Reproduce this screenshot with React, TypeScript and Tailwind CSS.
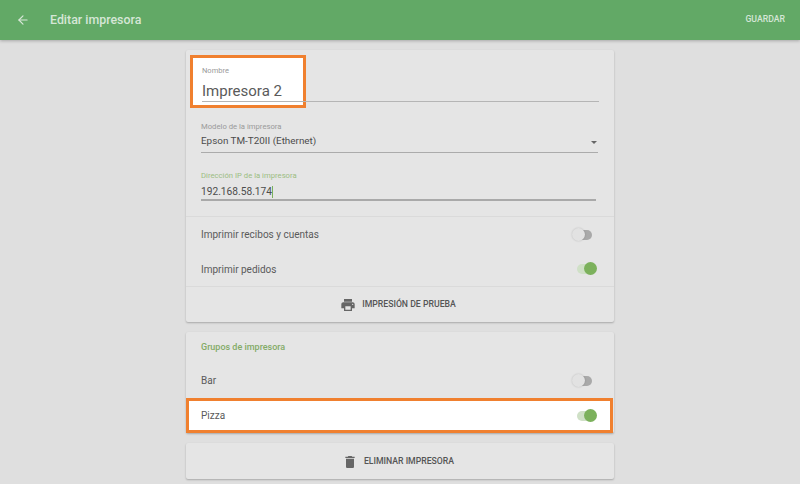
import { ArrowLeft } from "lucide-react"

function Toggle({ on }: { on: boolean }) {
  return (
    <div className="relative h-[20px] w-[25px]">
      <div className={`absolute left-[5px] top-[5px] h-[10px] w-[15px] rounded-full ${on ? "bg-[#cfe0c6]" : "bg-[#a9a9a9]"}`} />
      {on ? (
        <div className="absolute left-[12px] top-[3px] h-[13px] w-[13px] rounded-full bg-[#7cb15c]" />
      ) : (
        <div className="absolute left-0 top-[3px] h-[13px] w-[13px] rounded-full bg-[#e2e2e2] shadow-[0_0_2px_rgba(0,0,0,0.2)]" />
      )}
    </div>
  )
}

function SwitchRow({ label, on, className }: { label: string; on: boolean; className: string }) {
  return (
    <div className={`flex items-center justify-between pl-[15px] pr-[17px] ${className}`}>
      <span className="text-[10px] text-[#5a5a5a]">{label}</span>
      <Toggle on={on} />
    </div>
  )
}

function ActionButton({ label, icon, className }: { label: string; icon: React.ReactNode; className: string }) {
  return (
    <div className={`flex items-center justify-center gap-[6px] pr-[4px] ${className}`}>
      {icon}
      <span className="text-[8.7px] font-medium text-[#555]">{label}</span>
    </div>
  )
}

export default function App() {
  return (
    <div className="flex h-[484px] w-[800px] flex-col overflow-hidden bg-[#dfdfdf] font-['Roboto',sans-serif]">
      <header className="flex h-[40px] shrink-0 items-center bg-[#62a966] pl-[16px] pr-[15px] shadow-[0_1px_3px_rgba(0,0,0,0.25)]">
        <ArrowLeft className="h-[14px] w-[14px] text-[#d9e8d9]" strokeWidth={2} />
        <span className="ml-[20px] mt-[1px] text-[12.4px] font-medium text-[#d5e6d6]">Editar impresora</span>
        <span className="ml-auto text-[8.7px] font-medium text-[#d5e6d6]">GUARDAR</span>
      </header>

      <main className="mx-auto mt-[10px] flex w-[428px] flex-col gap-[10px]">
        <section className="h-[272px] rounded-[2px] bg-[#e5e5e5] shadow-[0_1px_2px_rgba(0,0,0,0.25)]">
          <div className="relative h-[59px] pl-[16px] pr-[15px] pt-[16px]">
            {/* orange callout behind the name field */}
            <div className="absolute left-[4px] top-[5px] h-[53px] w-[116px] border-[3px] border-[#f0802f] bg-white" />
            <div className="relative text-[7.5px] leading-[10px] text-[#9a9a9a]">Nombre</div>
            <div className="relative mt-[5px] text-[15px] leading-[20px] text-[#5a5a5a]">Impresora 2</div>
            <div className="relative h-px bg-[#b5b5b5]" />
          </div>

          <div className="relative mt-[10px] pl-[15px] pr-[16px] pt-[3px]">
            <div className="text-[7.7px] leading-[10px] text-[#9a9a9a]">Modelo de la impresora</div>
            <div className="mt-[2px] text-[9.9px] leading-[14px] text-[#4c4c4c]">Epson TM-T20II (Ethernet)</div>
            <div className="mt-[4px] h-px bg-[#ababab]" />
            <div className="absolute right-[17px] top-[22px] h-0 w-0 border-x-[3.5px] border-t-[3.5px] border-x-transparent border-t-[#666]" />
          </div>

          <div className="mt-[18px] pl-[15px] pr-[18px]">
            <div className="text-[7.7px] leading-[10px] text-[#9cbd82]">Dirección IP de la impresora</div>
            <div className="mt-[4px] flex items-center text-[10.2px] leading-[14px] text-[#4c4c4c]">
              192.168.58.174
              <span className="h-[12px] w-px bg-[#7cb15c]" />
            </div>
            <div className="h-[2px] bg-[#a9a9a9]" />
          </div>

          <div className="mt-[15px] h-px bg-[#dadada]" />
          <SwitchRow label="Imprimir recibos y cuentas" on={false} className="h-[35px]" />
          <SwitchRow label="Imprimir pedidos" on={true} className="h-[34px]" />
          <ActionButton
            label="IMPRESIÓN DE PRUEBA"
            className="h-[36px] border-t border-[#dadada]"
            icon={
              <svg viewBox="0 0 24 24" className="h-[16px] w-[16px] fill-[#666]">
                <path d="M19 8H5c-1.66 0-3 1.34-3 3v6h4v4h12v-4h4v-6c0-1.66-1.34-3-3-3zm-3 11H8v-5h8v5zm3-7c-.55 0-1-.45-1-1s.45-1 1-1 1 .45 1 1-.45 1-1 1zm-1-9H6v4h12V3z" />
              </svg>
            }
          />
        </section>

        <section className="h-[101px] rounded-[2px] bg-[#e5e5e5] shadow-[0_1px_2px_rgba(0,0,0,0.25)]">
          <div className="pl-[15px] pt-[9px] text-[9px] font-medium leading-[12px] text-[#83ab67]">Grupos de impresora</div>
          <SwitchRow label="Bar" on={false} className="mt-[10px] h-[35px]" />
          <SwitchRow label="Pizza" on={true} className="mr-[1px] h-[35px] border-[3px] border-[#f0802f] !pl-[12px] !pr-[13px] bg-white" />
        </section>

        <section className="rounded-[2px] bg-[#e5e5e5] pt-[1px] shadow-[0_1px_2px_rgba(0,0,0,0.25)]">
          <ActionButton
            label="ELIMINAR IMPRESORA"
            className="h-[35px]"
            icon={
              <svg viewBox="0 0 24 24" className="h-[16px] w-[16px] fill-[#666]">
                <path d="M6 19c0 1.1.9 2 2 2h8c1.1 0 2-.9 2-2V7H6v12zM19 4h-3.5l-1-1h-5l-1 1H5v2h14V4z" />
              </svg>
            }
          />
        </section>
      </main>
    </div>
  )
}
